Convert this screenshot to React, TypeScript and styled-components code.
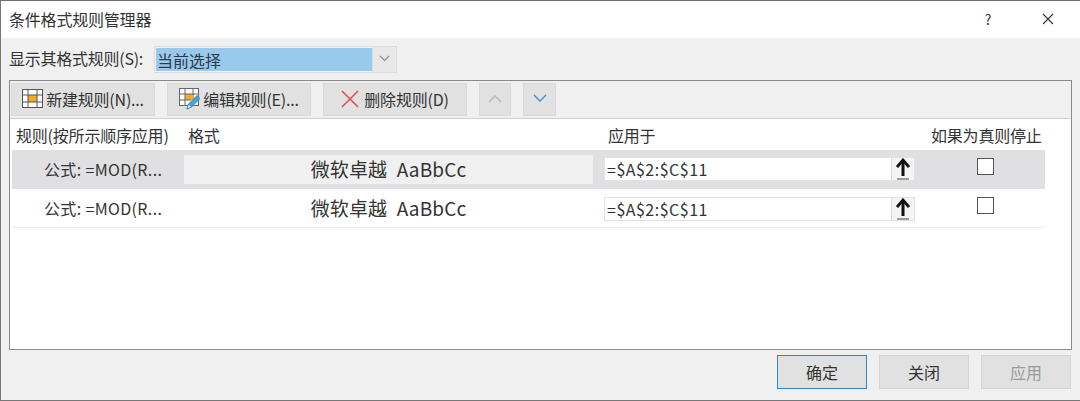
import React from "react";
import styled, { createGlobalStyle } from "styled-components";

const Global = createGlobalStyle`
  html, body { margin: 0; padding: 0; background: #f0f0f0; }
  body { font-family: "Noto Sans CJK SC", "Noto Sans", sans-serif; color: #222; }
`;

const Dialog = styled.div`
  width: 1080px; height: 401px; box-sizing: border-box;
  display: flex; flex-direction: column; overflow: hidden;
  background: #f0f0f0; border-top: 1px solid #6e6e6e; border-bottom: 1px solid #777;
  border-left: 1px solid #777;
`;
const TitleBar = styled.div`
  height: 37px; flex: none; box-sizing: border-box; background: #fff; display: flex; align-items: center;
  padding: 0 0 2px 8px; font-size: 16px; color: #333;
`;
const TitleText = styled.span`flex: 1; letter-spacing: -0.2px;`;
const WinButton = styled.div<{ $mr: number }>`
  width: 24px; height: 24px; display: flex; align-items: center; justify-content: center;
  margin-right: ${(p) => p.$mr}px; font-size: 14px; color: #333;
`;
const ShowRow = styled.div`
  height: 42px; flex: none; display: flex; align-items: center; padding-left: 8px;
  font-size: 16px; color: #333;
`;
const ShowLabel = styled.span`width: 145px; flex: none; letter-spacing: -0.25px; margin-bottom: 2px;`;
const Combo = styled.div`
  width: 243px; height: 27px; box-sizing: border-box; display: flex; border: 1px solid #dcdcdc;
  background: #f2f2f2; padding: 1px 0 1px 1px;
`;
const ComboValue = styled.div`
  flex: 1; background: #99c9ec; font-size: 16px; line-height: 24px; color: #2b3a48; padding-left: 1px;
`;
const ComboArrow = styled.div`
  width: 23px; display: flex; align-items: center; justify-content: center;
  background: #e8e8e8; margin-top: -1px; margin-bottom: -1px; border-left: 1px solid #dadada;
`;
const Panel = styled.div`
  width: 1063px; height: 270px; flex: none; box-sizing: border-box; margin-left: 8px;
  border: 1px solid #8a8a8a; background: #fff; display: flex; flex-direction: column;
`;
const Toolbar = styled.div`
  height: 38px; flex: none; box-sizing: border-box; background: #f0f0f0; border-bottom: 1px solid #cfcfcf;
  display: flex; align-items: flex-start; padding: 2px 0 0 1px; gap: 12px;
`;
const ToolButton = styled.div<{ $w: number }>`
  width: ${(p) => p.$w}px; height: 33px; box-sizing: border-box; flex: none;
  background: #e1e1e1; border: 1px solid #d9d9d9; padding-bottom: 2px;
  display: flex; align-items: center; justify-content: center; gap: 3px;
  font-size: 16px; color: #333; letter-spacing: -0.2px;
`;
const HeaderRow = styled.div`
  height: 31px; flex: none; display: flex; align-items: center; font-size: 16px; color: #333;
  width: 1035px; box-sizing: border-box; padding-left: 6px;
`;
const HeaderCell = styled.div<{ $w: number }>`
  width: ${(p) => p.$w}px; flex: none; height: 100%; box-sizing: border-box;
  display: flex; align-items: center; white-space: nowrap; letter-spacing: -0.2px;
`;
const Row = styled.div<{ $selected?: boolean }>`
  width: 1033px; height: 39px; box-sizing: border-box; margin-left: 2px; flex: none;
  display: flex; align-items: center;
  background: ${(p) => (p.$selected ? "#e0e0e2" : "#fff")};
  border-bottom: ${(p) => (p.$selected ? "none" : "1px solid #ececec")};
`;
const RuleCell = styled.div`
  width: 172px; flex: none; box-sizing: border-box; padding: 0 0 1px 32px; font-size: 16px; color: #333;
  white-space: nowrap; letter-spacing: 0.35px;
`;
const FormatCell = styled.div<{ $selected?: boolean }>`
  width: 409px; height: 29px; flex: none; margin-right: 11px;
  background: ${(p) => (p.$selected ? "#f0f0f0" : "transparent")};
  display: flex; align-items: center; justify-content: center;
  font-size: 19px; color: #333; word-spacing: 5px; letter-spacing: 0.15px;
  padding: 0 0 2px 0; box-sizing: border-box;
`;
const RangeInput = styled.div<{ $selected?: boolean }>`
  width: 311px; height: 24px; flex: none; box-sizing: border-box; background: #fff; border: 1px solid #e2e2e2;
  display: flex; align-items: stretch; font-size: 16px; color: #333;
  margin-top: ${(p) => (p.$selected ? -1 : 2)}px;
`;
const RangeText = styled.div`flex: 1; line-height: 22px; padding-left: 2px; letter-spacing: 0.5px;`;
const RangeButton = styled.div`
  width: 22px; flex: none; display: flex; align-items: center; justify-content: center;
  background: #f4f4f4; border-left: 1px solid #dcdcdc;
`;
const CheckCell = styled.div`
  flex: 1; display: flex; justify-content: center; padding: 0 1px 6px 11px;
`;
const Check = styled.div`
  width: 17px; height: 17px; box-sizing: border-box; background: #fff; border: 1px solid #555;
`;
const Footer = styled.div`
  flex: 1; display: flex; justify-content: flex-end; align-items: flex-start; padding: 5px 9px 0 0; gap: 12px;
`;
const FootButton = styled.div<{ $primary?: boolean; $disabled?: boolean }>`
  width: 90px; height: 34px; box-sizing: border-box; background: #e1e1e1;
  border: 1px solid ${(p) => (p.$primary ? "#2f86c9" : "#d4d4d4")};
  display: flex; align-items: center; justify-content: center; font-size: 16px;
  color: ${(p) => (p.$disabled ? "#9a9a9a" : "#333")};
`;

const NewIcon = () => (
  <svg width="21" height="19" viewBox="0 0 21 19">
    <rect x="0.5" y="0.5" width="20" height="18" fill="#fff" stroke="#555" />
    <rect x="6" y="6" width="9" height="7" fill="#f7a928" />
    <path d="M0 6h21M0 13h21M6 0v19M15 0v19" stroke="#555" fill="none" />
  </svg>
);
const EditIcon = () => (
  <svg width="21" height="22" viewBox="0 0 21 22">
    <rect x="0.5" y="0.5" width="19" height="17" fill="#fff" stroke="#666" />
    <rect x="6" y="6" width="9" height="6" fill="#f7a928" />
    <path d="M0 6h20M0 12h12M6 0v18M14 0v7" stroke="#666" fill="none" />
    <path d="M8 21l1.5-5L18 7.5l3 3L12.5 19z" fill="#4a9fd8" stroke="#2f7fb8" strokeWidth="0.8" />
    <path d="M8 21l1.5-5 3 3z" fill="#fff" stroke="#2f7fb8" strokeWidth="0.8" />
  </svg>
);
const DeleteIcon = () => (
  <svg width="18" height="18" viewBox="0 0 18 18" style={{ marginRight: 2 }}>
    <path d="M1 1l16 16M17 1L1 17" stroke="#e4474d" strokeWidth="1.5" fill="none" />
  </svg>
);
const Chevron = ({ up, color, size = 14 }: { up?: boolean; color: string; size?: number }) => (
  <svg width={size} height={size * 9 / 14} viewBox="0 0 14 9">
    <path d={up ? "M1 8l6-6 6 6" : "M1 1l6 6 6-6"} stroke={color} strokeWidth="1.4" fill="none" />
  </svg>
);
const UpArrow = () => (
  <svg width="14" height="22" viewBox="0 0 14 22">
    <path d="M7 18V3" stroke="#111" strokeWidth="3" fill="none" />
    <path d="M1 9l6-7 6 7" stroke="#111" strokeWidth="2.8" fill="none" />
    <path d="M1 21h12" stroke="#444" strokeWidth="1" />
  </svg>
);
const CloseIcon = () => (
  <svg width="12" height="12" viewBox="0 0 12 12">
    <path d="M1 1l10 10M11 1L1 11" stroke="#333" strokeWidth="1.1" fill="none" />
  </svg>
);

const RuleRow = ({ selected }: { selected?: boolean }) => (
  <Row $selected={selected}>
    <RuleCell>公式: =MOD(R...</RuleCell>
    <FormatCell $selected={selected}>微软卓越 AaBbCc</FormatCell>
    <RangeInput $selected={selected}>
      <RangeText>=$A$2:$C$11</RangeText>
      <RangeButton><UpArrow /></RangeButton>
    </RangeInput>
    <CheckCell><Check /></CheckCell>
  </Row>
);

export default function App() {
  return (
    <>
      <Global />
      <Dialog>
        <TitleBar>
          <TitleText>条件格式规则管理器</TitleText>
          <WinButton $mr={36}>?</WinButton>
          <WinButton $mr={20}><CloseIcon /></WinButton>
        </TitleBar>
        <ShowRow>
          <ShowLabel>显示其格式规则(S):</ShowLabel>
          <Combo>
            <ComboValue>当前选择</ComboValue>
            <ComboArrow><Chevron color="#8a8a8a" size={11} /></ComboArrow>
          </Combo>
        </ShowRow>
        <Panel>
          <Toolbar>
            <ToolButton $w={144}><NewIcon />新建规则(N)...</ToolButton>
            <ToolButton $w={144}><EditIcon />编辑规则(E)...</ToolButton>
            <ToolButton $w={144}><DeleteIcon />删除规则(D)</ToolButton>
            <ToolButton $w={32}><Chevron up color="#b5b5b5" /></ToolButton>
            <ToolButton $w={33}><Chevron color="#3f8fc4" /></ToolButton>
          </Toolbar>
          <HeaderRow>
            <HeaderCell $w={172}>规则(按所示顺序应用)</HeaderCell>
            <HeaderCell $w={420}>格式</HeaderCell>
            <HeaderCell $w={323}>应用于</HeaderCell>
            <HeaderCell $w={115}>如果为真则停止</HeaderCell>
          </HeaderRow>
          <RuleRow selected />
          <RuleRow />
        </Panel>
        <Footer>
          <FootButton $primary>确定</FootButton>
          <FootButton>关闭</FootButton>
          <FootButton $disabled>应用</FootButton>
        </Footer>
      </Dialog>
    </>
  );
}
